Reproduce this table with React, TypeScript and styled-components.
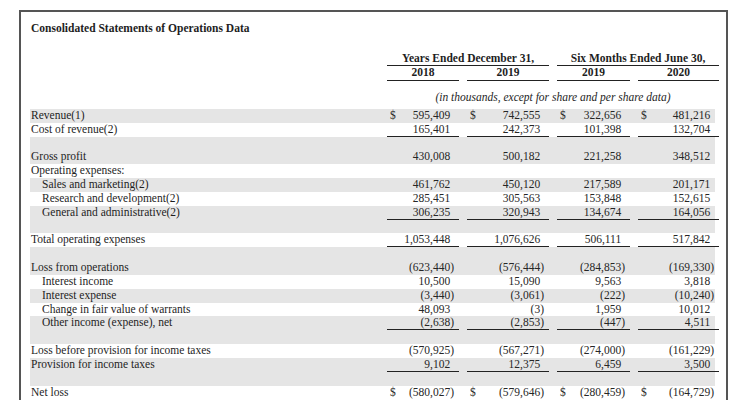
import React from "react";
import styled, { createGlobalStyle } from "styled-components";

const Global = createGlobalStyle`
  html, body {
    margin: 0;
    padding: 0;
    background: #ffffff;
    overflow: hidden;
  }
  #root {
    font-family: "Liberation Serif", "Times New Roman", serif;
    color: #1e1e1e;
    font-size: 11.5px;
  }
`;

const COLS = "349px 72px 82px 73px 81px";

const Frame = styled.div`
  box-sizing: border-box;
  margin: 10px 0 0 19px;
  width: 709px;
  min-height: 400px;
  border: 2px solid #555555;
  border-bottom: none;
  padding: 9.4px 0 0 9px;
`;

const Title = styled.div`
  font-weight: bold;
  font-size: 11.5px;
  line-height: 14px;
  padding-left: 1px;
`;

const HeadGrid = styled.div<{ $top: number }>`
  display: grid;
  grid-template-columns: ${COLS};
  column-gap: 8px;
  width: 685px;
  margin-top: ${(p) => p.$top}px;
`;

const GroupHead = styled.div<{ $start: number }>`
  grid-column: ${(p) => p.$start} / span 2;
  text-align: center;
  font-weight: bold;
  line-height: 13px;
  border-bottom: 1px solid #222222;
`;

const YearHead = styled.div<{ $col: number }>`
  grid-column: ${(p) => p.$col};
  text-align: center;
  font-weight: bold;
  line-height: 13px;
  padding-bottom: 1px;
  border-bottom: 1px solid #222222;
`;

const Note = styled.div`
  grid-column: 2 / 6;
  text-align: center;
  font-style: italic;
  line-height: 13px;
`;

const Body = styled.div`
  margin-top: 4.7px;
  width: 685px;
`;

const Row = styled.div<{ $shade: boolean }>`
  display: grid;
  grid-template-columns: ${COLS};
  column-gap: 8px;
  height: 13.83px;
  background: ${(p) => (p.$shade ? "#e5e5e5" : "transparent")};
`;

const Label = styled.div<{ $indent: boolean }>`
  line-height: 12px;
  padding-left: ${(p) => (p.$indent ? 12 : 1)}px;
  white-space: nowrap;
`;

const Amount = styled.div<{ $rule: boolean }>`
  box-sizing: border-box;
  height: 13.83px;
  display: flex;
  align-items: flex-start;
  line-height: 12px;
  padding: 0 5px 0 3px;
  border-bottom: ${(p) => (p.$rule ? "1px solid #222222" : "none")};
  color: #262626;
`;

const Dollar = styled.span`
  flex: none;
`;

const Num = styled.span`
  flex: 1;
  text-align: right;
  white-space: nowrap;
`;

const Close = styled.span`
  flex: none;
  width: 3.8px;
`;

type Line = {
  label?: string;
  vals?: string[];
  indent?: boolean;
  shade?: boolean;
  rule?: boolean;
  dollar?: boolean;
};

const SP: Line = { shade: true };

const lines: Line[] = [
  { label: "Revenue(1)", vals: ["595,409", "742,555", "322,656", "481,216"], shade: true, dollar: true },
  { label: "Cost of revenue(2)", vals: ["165,401", "242,373", "101,398", "132,704"], rule: true },
  SP,
  { label: "Gross profit", vals: ["430,008", "500,182", "221,258", "348,512"], shade: true },
  { label: "Operating expenses:" },
  { label: "Sales and marketing(2)", indent: true, vals: ["461,762", "450,120", "217,589", "201,171"], shade: true },
  { label: "Research and development(2)", indent: true, vals: ["285,451", "305,563", "153,848", "152,615"] },
  { label: "General and administrative(2)", indent: true, vals: ["306,235", "320,943", "134,674", "164,056"], shade: true, rule: true },
  SP,
  { label: "Total operating expenses", vals: ["1,053,448", "1,076,626", "506,111", "517,842"], rule: true },
  SP,
  { label: "Loss from operations", vals: ["(623,440)", "(576,444)", "(284,853)", "(169,330)"], shade: true },
  { label: "Interest income", indent: true, vals: ["10,500", "15,090", "9,563", "3,818"] },
  { label: "Interest expense", indent: true, vals: ["(3,440)", "(3,061)", "(222)", "(10,240)"], shade: true },
  { label: "Change in fair value of warrants", indent: true, vals: ["48,093", "(3)", "1,959", "10,012"] },
  { label: "Other income (expense), net", indent: true, vals: ["(2,638)", "(2,853)", "(447)", "4,511"], shade: true, rule: true },
  SP,
  { label: "Loss before provision for income taxes", vals: ["(570,925)", "(567,271)", "(274,000)", "(161,229)"] },
  { label: "Provision for income taxes", vals: ["9,102", "12,375", "6,459", "3,500"], shade: true, rule: true },
  SP,
  { label: "Net loss", vals: ["(580,027)", "(579,646)", "(280,459)", "(164,729)"], dollar: true },
];

function AmountCell({ v, rule, dollar }: { v?: string; rule: boolean; dollar: boolean }) {
  const neg = !!v && v.endsWith(")");
  const text = v ? (neg ? v.slice(0, -1) : v) : "";
  return (
    <Amount $rule={rule}>
      {dollar && <Dollar>$</Dollar>}
      <Num>{text}</Num>
      <Close>{neg ? ")" : ""}</Close>
    </Amount>
  );
}

export default function App() {
  return (
    <>
      <Global />
      <Frame>
        <Title>Consolidated Statements of Operations Data</Title>
        <HeadGrid $top={16.2}>
          <GroupHead $start={2}>Years Ended December 31,</GroupHead>
          <GroupHead $start={4}>Six Months Ended June 30,</GroupHead>
          <YearHead $col={2}>2018</YearHead>
          <YearHead $col={3}>2019</YearHead>
          <YearHead $col={4}>2019</YearHead>
          <YearHead $col={5}>2020</YearHead>
        </HeadGrid>
        <HeadGrid $top={10.7}>
          <Note>(in thousands, except for share and per share data)</Note>
        </HeadGrid>
        <Body>
          {lines.map((l, i) => (
            <Row key={i} $shade={!!l.shade}>
              <Label $indent={!!l.indent}>{l.label ?? ""}</Label>
              {[0, 1, 2, 3].map((c) => (
                <AmountCell key={c} v={l.vals?.[c]} rule={!!l.rule} dollar={!!l.dollar} />
              ))}
            </Row>
          ))}
        </Body>
      </Frame>
    </>
  );
}
